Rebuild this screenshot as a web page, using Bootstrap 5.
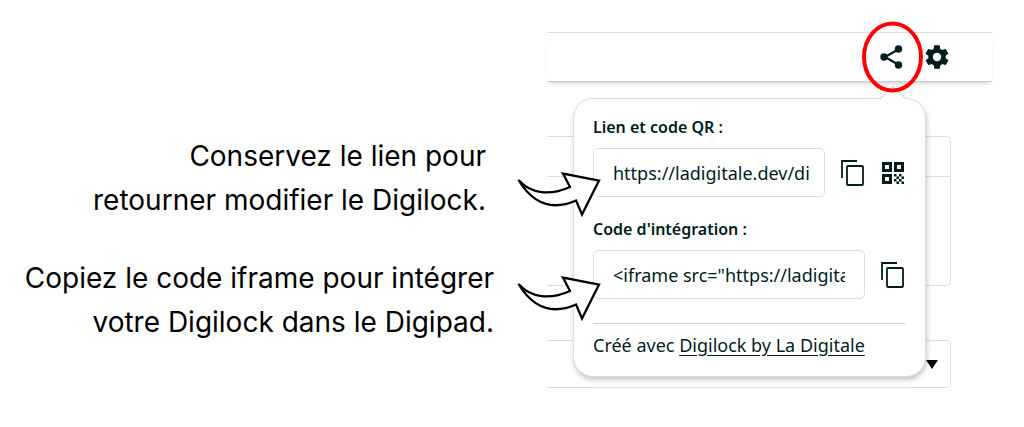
<!DOCTYPE html>
<html lang="fr">
<head>
<meta charset="utf-8">
<meta name="viewport" content="width=device-width, initial-scale=1">
<title>Digilock – partage</title>
<link href="https://cdn.jsdelivr.net/npm/bootstrap@5.3.0/dist/css/bootstrap.min.css" rel="stylesheet">
<style>
  :root { --ink: #001d1d; --line: #ddd; }
  body { font-family: "Noto Sans", "Open Sans", sans-serif; color: var(--ink); background: #fff; }
  .notes { font-family: Inter, "Noto Sans", sans-serif; font-size: 28px; line-height: 44px; color: #000; padding-top: 134px; }
  .note-row { margin-right: -54px; gap: 23px; }
  .note-row + .note-row { margin-top: 34px; }
  .arrow { position: relative; z-index: 3; width: 84px; height: 46px; margin-top: 37px; }
  .note-row + .note-row .arrow { margin-top: 19px; }
  .app { width: 445px; margin: 32px 32px 0 0; }
  .topbar { height: 50px; border-top: 1px solid var(--line); border-bottom: 1px solid #ccc; box-shadow: 0 4px 5px -3px rgba(0,0,0,.22); padding-right: 41px; gap: 17px; }
  .icon-btn { border: 0; background: none; padding: 0; color: var(--ink); display: flex; }
  .ring { position: absolute; left: 50%; top: 50%; transform: translate(-50%, -50%); z-index: 4; pointer-events: none; }
  .app-body { padding: 54px 41px 0 0; }
  .panel { border: 1px solid var(--line); border-left: 0; border-radius: 0 5px 5px 0; height: 150px; }
  .panel-head { height: 40px; border-bottom: 1px solid var(--line); }
  .choice { display: flex; align-items: center; justify-content: flex-end; height: 48px; margin-top: 54px; border: 1px solid var(--line); border-left: 0; border-radius: 0 5px 5px 0; background: #fff; width: 100%; padding: 0 12px; }
  .share-pop { position: absolute; z-index: 2; top: 66px; left: 26px; right: 66px; border: 1px solid var(--line); border-radius: 20px; background: #fff; padding: 15px 20px 18px 19px; box-shadow: 1px 3px 5px rgba(0,0,0,.22); }
  .tip { position: absolute; right: 19px; top: -13px; }
  .share-pop label { display: block; font-size: 16px; line-height: 26px; font-weight: 600; margin-bottom: 8px; }
  .share-pop .form-control { height: 49px; border-color: var(--line); border-radius: 5px; padding: 0 19px; font-size: 18px; color: var(--ink); flex: 1 1 0; min-width: 0; }
  .share-pop .field-link .form-control { padding-right: 12px; }
  .field { gap: 16px; }
  .field-code { margin-bottom: 24px; }
  .field-link { margin-bottom: 19px; }
  .credit { border-top: 1px solid #ccc; padding-top: 8px; font-size: 18px; line-height: 26px; }
  .credit a { color: inherit; text-underline-offset: 3px; }
</style>
</head>
<body>
<svg class="d-none">
  <symbol id="copy" viewBox="0 0 24 28"><path d="M1 19V2H16" fill="none" stroke="currentColor" stroke-width="1.800"/><rect x="6" y="7" width="16" height="19" rx="1" fill="none" stroke="currentColor" stroke-width="1.800"/></symbol>
  <symbol id="swoosh" viewBox="0 0 84 46"><path d="M1.500 9C14 23 33 25 53 16L46 2.500 82 9.500 65 43.500 59 29.500C35 40 16 33 1.500 9Z" fill="#fff" stroke="#000" stroke-width="2.300"/></symbol>
</svg>
<main class="d-flex">
  <section class="notes flex-grow-1">
    <div class="note-row d-flex justify-content-end">
      <p class="text-end mb-0 pe-2">Conservez le lien pour<br>retourner modifier le Digilock.</p>
      <svg class="arrow flex-shrink-0" aria-hidden="true"><use href="#swoosh"/></svg>
    </div>
    <div class="note-row d-flex justify-content-end">
      <p class="text-end mb-0">Copiez le code iframe pour intégrer<br>votre Digilock dans le Digipad.</p>
      <svg class="arrow flex-shrink-0" aria-hidden="true"><use href="#swoosh"/></svg>
    </div>
  </section>

  <section class="app position-relative flex-shrink-0">
    <header class="topbar d-flex align-items-center justify-content-end">
      <button class="icon-btn position-relative" type="button" aria-label="Partager">
        <svg width="28" height="28" viewBox="0 0 28 28"><path d="M21 6 7 14l14 8" fill="none" stroke="currentColor" stroke-width="2.200"/><g fill="currentColor"><circle cx="20.500" cy="6" r="3.700"/><circle cx="6" cy="14" r="3.700"/><circle cx="20.500" cy="22" r="3.700"/></g></svg>
        <svg class="ring" width="62" height="72" viewBox="0 0 62 72"><ellipse cx="31.500" cy="36" rx="28.500" ry="33.500" fill="none" stroke="#f00" stroke-width="4"/></svg>
      </button>
      <button class="icon-btn" type="button" aria-label="Paramètres">
        <svg width="28" height="28" viewBox="0 0 24 24" fill="currentColor"><path d="M19.400 13a7.500 7.500 0 0 0 0-2l2.100-1.600c.2-.2.300-.4.100-.7l-2-3.400c-.1-.2-.4-.3-.6-.2l-2.500 1a7.300 7.300 0 0 0-1.700-1l-.4-2.700c0-.2-.2-.4-.5-.4h-4c-.2 0-.4.2-.4.4l-.4 2.700c-.6.3-1.200.6-1.700 1l-2.500-1c-.2-.1-.5 0-.6.2l-2 3.400c-.1.200-.1.500.1.700L4.600 11a7.500 7.500 0 0 0 0 2l-2.100 1.600c-.2.2-.3.500-.1.700l2 3.400c.1.200.4.300.6.200l2.500-1c.5.400 1.100.8 1.700 1l.4 2.700c0 .2.200.4.400.4h4c.3 0 .5-.2.500-.4l.4-2.700c.6-.3 1.200-.6 1.700-1l2.500 1c.2.100.5 0 .6-.2l2-3.400c.1-.2.100-.5-.1-.7ZM12 15.600a3.600 3.600 0 1 1 0-7.200 3.600 3.600 0 0 1 0 7.200Z"/></svg>
      </button>
    </header>
    <div class="app-body">
      <div class="panel"><div class="panel-head"></div></div>
      <button class="choice" type="button" aria-label="Ouvrir la liste"><svg width="12" height="9" viewBox="0 0 12 9"><path d="M0 0h12L6 9Z"/></svg></button>
    </div>

    <div class="share-pop">
      <svg class="tip" width="26" height="13" viewBox="0 0 26 13"><path d="M0 13 13 0 26 13" fill="#fff" stroke="#ccc"/></svg>
      <label for="lien">Lien et code QR :</label>
      <div class="field field-link d-flex align-items-center">
        <input id="lien" class="form-control" type="text" value="https://ladigitale.dev/di" readonly>
        <button class="icon-btn" type="button" aria-label="Copier le lien"><svg width="24" height="28"><use href="#copy"/></svg></button>
        <button class="icon-btn" type="button" aria-label="Afficher le code QR"><svg width="24" height="24" viewBox="0 0 24 24" fill="currentColor"><path fill-rule="evenodd" d="M1 1h10v10H1ZM4 4v4h4V4ZM13 1h10v10H13ZM16 4v4h4V4ZM1 13h10v10H1ZM4 16v4h4v-4Z"/><path d="M13 13h2.500v2.500H13ZM18 13h2.500v2.500H18ZM15.500 15.500H18V18h-2.500ZM20.500 15.500H23V18h-2.500ZM13 18h2.500v2.500H13ZM18 18h2.500v2.500H18ZM15.500 20.500H18V23h-2.500ZM20.500 20.500H23V23h-2.500Z"/></svg></button>
      </div>
      <label for="code">Code d'intégration :</label>
      <div class="field field-code d-flex align-items-center">
        <input id="code" class="form-control" type="text" value="&lt;iframe src=&quot;https://ladigitale.dev/digilock/&quot;&gt;&lt;/iframe&gt;" readonly>
        <button class="icon-btn" type="button" aria-label="Copier le code"><svg width="24" height="28"><use href="#copy"/></svg></button>
      </div>
      <div class="credit">Créé avec <a href="#">Digilock by La Digitale</a></div>
    </div>
  </section>
</main>
<script src="https://cdn.jsdelivr.net/npm/bootstrap@5.3.0/dist/js/bootstrap.bundle.min.js"></script>
</body>
</html>
